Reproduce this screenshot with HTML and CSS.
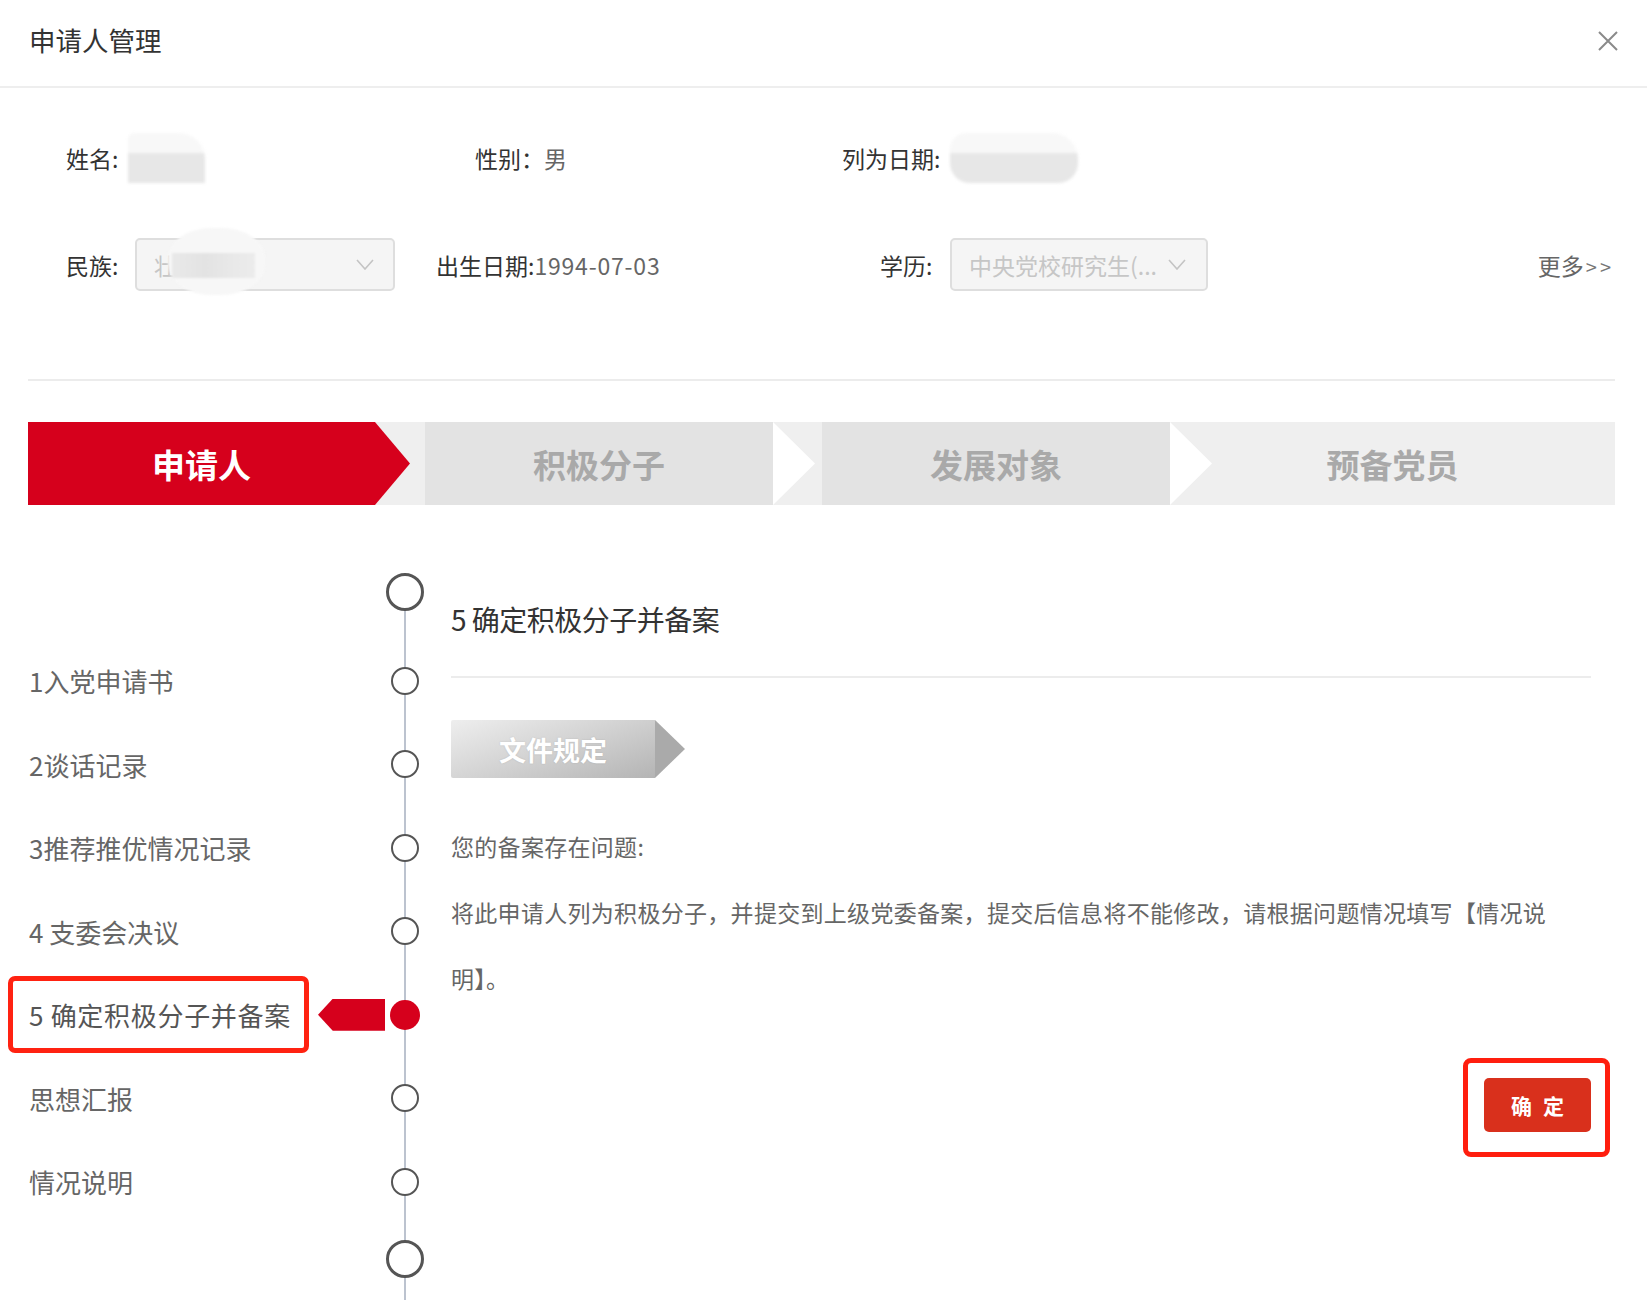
FILE: index.html
```html
<!DOCTYPE html>
<html lang="zh-CN">
<head>
<meta charset="utf-8">
<title>申请人管理</title>
<link rel="stylesheet" href="styles.css">
</head>
<body>
<div class="dialog">
  <header class="dlg-head">
    <h1 class="dlg-title">申请人管理</h1>
    <span class="dlg-close">
      <svg width="20" height="20" viewBox="0 0 20 20"><path d="M1 1L19 19M19 1L1 19" stroke="#8a8a8a" stroke-width="2" fill="none"/></svg>
    </span>
  </header>

  <section class="info">
    <div class="info-row row1">
      <div class="field f-name"><span class="lbl lbl-name">姓名:</span><span class="blur blur-name"></span></div>
      <div class="field f-sex"><span class="lbl">性别：</span><span class="val">男</span></div>
      <div class="field f-date"><span class="lbl lbl-date">列为日期:</span><span class="blur blur-date"></span></div>
    </div>
    <div class="info-row row2">
      <div class="field f-nation"><span class="lbl lbl-nation">民族:</span>
        <div class="select s-nation">
          <span class="sel-text">壮</span>
          <span class="blur-nation"></span>
          <svg class="chev" width="18" height="11" viewBox="0 0 18 11"><path d="M1 1L9 10L17 1" stroke="#c4c4c4" stroke-width="1.6" fill="none"/></svg>
        </div>
      </div>
      <div class="field f-birth"><span class="lbl">出生日期:</span><span class="val val-date">1994-07-03</span></div>
      <div class="field f-edu"><span class="lbl lbl-edu">学历:</span>
        <div class="select s-edu">
          <span class="sel-text">中央党校研究生(...</span>
          <svg class="chev" width="18" height="11" viewBox="0 0 18 11"><path d="M1 1L9 10L17 1" stroke="#c4c4c4" stroke-width="1.6" fill="none"/></svg>
        </div>
      </div>
      <span class="more">更多<span class="more-arr">&gt;&gt;</span></span>
    </div>
  </section>

  <div class="divider"></div>

  <nav class="steps">
    <div class="step step-active">申请人</div>
    <div class="step-gap gap1"></div>
    <div class="step step-dark step-arrow">积极分子</div>
    <div class="step-gap gap2"></div>
    <div class="step step-dark step-arrow">发展对象</div>
    <div class="step step-last">预备党员</div>
  </nav>

  <section class="main">
    <div class="timeline">
      <div class="tl-cap"><span class="node node-big"></span></div>
      <div class="tl-list">
        <div class="tl-row"><span class="tl-label">1入党申请书</span><span class="tl-ptr"></span><span class="tl-node"><span class="node"></span></span></div>
        <div class="tl-row"><span class="tl-label">2谈话记录</span><span class="tl-ptr"></span><span class="tl-node"><span class="node"></span></span></div>
        <div class="tl-row"><span class="tl-label">3推荐推优情况记录</span><span class="tl-ptr"></span><span class="tl-node"><span class="node"></span></span></div>
        <div class="tl-row"><span class="tl-label">4 支委会决议</span><span class="tl-ptr"></span><span class="tl-node"><span class="node"></span></span></div>
        <div class="tl-row tl-current"><span class="tl-label"><span class="hl-box">5 确定积极分子并备案</span></span><span class="tl-ptr"><span class="pointer"></span></span><span class="tl-node"><span class="node node-red"></span></span></div>
        <div class="tl-row"><span class="tl-label">思想汇报</span><span class="tl-ptr"></span><span class="tl-node"><span class="node"></span></span></div>
        <div class="tl-row"><span class="tl-label">情况说明</span><span class="tl-ptr"></span><span class="tl-node"><span class="node"></span></span></div>
      </div>
      <div class="tl-cap tl-cap-end"><span class="node node-big"></span></div>
    </div>

    <div class="content">
      <h2 class="c-title">5 确定积极分子并备案</h2>
      <div class="c-rule"></div>
      <div class="badge"><span class="badge-body">文件规定</span><span class="badge-tip"></span></div>
      <p class="c-text">您的备案存在问题:</p>
      <p class="c-text c-para">将此申请人列为积极分子，并提交到上级党委备案，提交后信息将不能修改，请根据问题情况填写【情况说明】。</p>
      <div class="actions">
        <div class="hl-btn"><button class="btn-ok">确 定</button></div>
      </div>
    </div>
  </section>
</div>
</body>
</html>
```

FILE: styles.css
```css
html, body {
  margin: 0;
  padding: 0;
  background: #ffffff;
  overflow: hidden;
}
body {
  font-family: "Noto Sans CJK SC", "Noto Sans", "Liberation Sans", sans-serif;
  color: #333;
}
.dialog {
  width: 1647px;
  height: 1300px;
  overflow: hidden;
}

/* header */
.dlg-head {
  height: 86px;
  border-bottom: 2px solid #eeeeee;
  display: flex;
  align-items: center;
  justify-content: space-between;
  padding: 0 29px 0 29px;
}
.dlg-title {
  margin: 0;
  font-size: 26.5px;
  font-weight: 400;
  color: #333;
  line-height: 1;
  margin-top: -6px;
}
.dlg-close {
  display: flex;
  margin-top: -4px;
}

/* info */
.info {
  padding: 45px 0 0 66px;
  font-size: 23px;
}
.info-row {
  display: flex;
  align-items: center;
}
.row1 {
  height: 50px;
}
.row2 {
  height: 53px;
  margin-top: 55px;
  padding-right: 33px;
}
.field {
  display: flex;
  align-items: center;
  flex: none;
}
.lbl {
  color: #333;
  flex: none;
}
.val {
  color: #666;
}
.val-date {
  letter-spacing: 0.8px;
}
.f-name { width: 409px; }
.lbl-name { width: 62px; }
.f-sex { width: 367px; }
.lbl-date { width: 108px; }
.blur {
  display: inline-block;
  height: 50px;
  background: linear-gradient(#f8f8f8 0 40%, #e7e7e7 40% 100%);
  filter: blur(1.5px);
}
.blur-name { width: 77px; border-radius: 6px 26px 0 0; }
.blur-date { width: 128px; border-radius: 16px 26px 20px 20px; }

.f-nation { width: 370px; }
.lbl-nation { width: 69px; }
.select {
  position: relative;
  box-sizing: border-box;
  height: 53px;
  border: 2px solid #dedede;
  border-radius: 5px;
  background: #f5f5f5;
  display: flex;
  align-items: center;
  padding-left: 17px;
  color: #c6c6c6;
}
.s-nation { width: 260px; }
.s-edu { width: 258px; }
.sel-text { flex: 1; white-space: nowrap; }
.chev { flex: none; margin-right: 19px; }
.s-edu .chev { margin-right: 20px; }
.blur-nation {
  position: absolute;
  left: 31px;
  top: -12px;
  width: 97px;
  height: 67px;
  border-radius: 45%;
  background: #f7f7f7;
  filter: blur(1px);
}
.blur-nation::before {
  content: "";
  position: absolute;
  left: 4px;
  width: 83px;
  top: 25px;
  height: 25px;
  background: linear-gradient(90deg, #e9e9e9, #e3e3e3 40%, #e8e8e8 70%, #ececec);
}
.f-birth { width: 444px; }
.lbl-edu { width: 70px; }
.more {
  margin-left: auto;
  color: #666;
  font-size: 23px;
}
.more-arr {
  font-size: 20px;
  color: #777;
  letter-spacing: 3px;
  margin-left: 2px;
}

.divider {
  height: 2px;
  background: #ececec;
  margin: 88px 32px 0 28px;
}

/* steps */
.steps {
  display: flex;
  height: 83px;
  margin: 41px 32px 0 28px;
  background: #efefef;
}
.step {
  position: relative;
  flex: none;
  display: flex;
  align-items: center;
  justify-content: center;
  font-size: 33px;
  font-weight: 700;
  color: #a9a9a9;
}
.step-active {
  width: 347px;
  background: #d6001c;
  color: #fff;
}
.step-active::after {
  content: "";
  position: absolute;
  left: 347px;
  top: 0;
  width: 35px;
  height: 100%;
  background: #d6001c;
  clip-path: polygon(0 0, 100% 50%, 0 100%);
}
.step-gap { flex: none; }
.gap1 { width: 50px; }
.gap2 { width: 49px; }
.step-dark {
  width: 348px;
  background: #e3e3e3;
}
.step-arrow::after {
  content: "";
  position: absolute;
  left: 100%;
  top: 0;
  width: 42px;
  height: 100%;
  background: #ffffff;
  clip-path: polygon(0 0, 100% 50%, 0 100%);
  z-index: 1;
}
.step-last {
  flex: 1;
}

/* main area */
.main {
  display: flex;
  height: 795px;
  overflow: hidden;
}
.timeline {
  position: relative;
  flex: none;
  width: 430px;
  padding-top: 68px;
}
.timeline::before {
  content: "";
  position: absolute;
  left: 404px;
  top: 86px;
  bottom: -60px;
  width: 2px;
  background: #bcc3cf;
}
.tl-cap {
  display: flex;
  padding-left: 386px;
  height: 38px;
}
.tl-cap-end {
  margin-top: 16px;
}
.node {
  position: relative;
  z-index: 1;
  display: block;
  box-sizing: border-box;
  width: 28px;
  height: 28px;
  border: 2.6px solid #555;
  border-radius: 50%;
  background: #fff;
}
.node-big {
  width: 38px;
  height: 38px;
  border-width: 3px;
}
.node-red {
  width: 30px;
  height: 30px;
  border: none;
  background: #d6001c;
}
.tl-list {
  margin-top: 28px;
}
.tl-row {
  display: flex;
  align-items: center;
  height: 83.5px;
}
.tl-label {
  flex: none;
  box-sizing: border-box;
  width: 318px;
  padding-left: 29px;
  font-size: 26px;
  color: #666;
  white-space: nowrap;
}
.tl-ptr {
  flex: none;
  width: 68px;
  display: flex;
  align-items: center;
}
.tl-node {
  flex: none;
  width: 38px;
  display: flex;
  justify-content: center;
}
.hl-box {
  display: flex;
  align-items: center;
  box-sizing: border-box;
  margin-left: -21px;
  width: 301px;
  height: 77px;
  padding-left: 16px;
  border: 5px solid #ff2211;
  border-radius: 7px;
  letter-spacing: 0.7px;
  color: #555;
}
.pointer {
  display: block;
  width: 67px;
  height: 32px;
  background: #d6001c;
  clip-path: polygon(22% 0, 100% 0, 100% 100%, 22% 100%, 0 50%);
}

/* content */
.content {
  flex: none;
  width: 1140px;
  margin-left: 21px;
  padding-top: 94px;
}
.c-title {
  margin: 0;
  height: 40px;
  line-height: 40px;
  font-size: 28px;
  font-weight: 400;
  letter-spacing: -0.5px;
  color: #333;
}
.c-rule {
  height: 2px;
  background: #ececec;
  margin-top: 37px;
}
.badge {
  display: flex;
  margin-top: 42px;
  height: 58px;
}
.badge-body {
  width: 204px;
  display: flex;
  align-items: center;
  justify-content: center;
  background: linear-gradient(160deg, #eeeeee 0%, #d2d2d2 50%, #b4b4b4 100%);
  border-radius: 2px 0 0 2px;
  color: #fff;
  font-size: 27px;
  font-weight: 700;
  text-shadow: 0 0 2px rgba(0,0,0,0.12);
}
.badge-tip {
  width: 30px;
  background: #aaaaaa;
  clip-path: polygon(0 0, 100% 50%, 0 100%);
}
.c-text {
  margin: 0;
  font-size: 23px;
  line-height: 66px;
  letter-spacing: 0.3px;
  color: #666;
}
.c-text:first-of-type {
  margin-top: 35px;
}
.c-para {
  width: 1100px;
}
.actions {
  display: flex;
  justify-content: flex-end;
  margin-top: 47px;
}
.hl-btn {
  margin-right: -19px;
  padding: 15px 14px 20px 16px;
  border: 5px solid #ff1e0e;
  border-radius: 8px;
}
.btn-ok {
  display: block;
  width: 107px;
  height: 54px;
  border: none;
  border-radius: 5px;
  background: #d9301c;
  color: #fff;
  font-family: inherit;
  font-size: 21px;
  font-weight: 700;
  letter-spacing: 3px;
  padding: 0 0 0 3px;
}
```
